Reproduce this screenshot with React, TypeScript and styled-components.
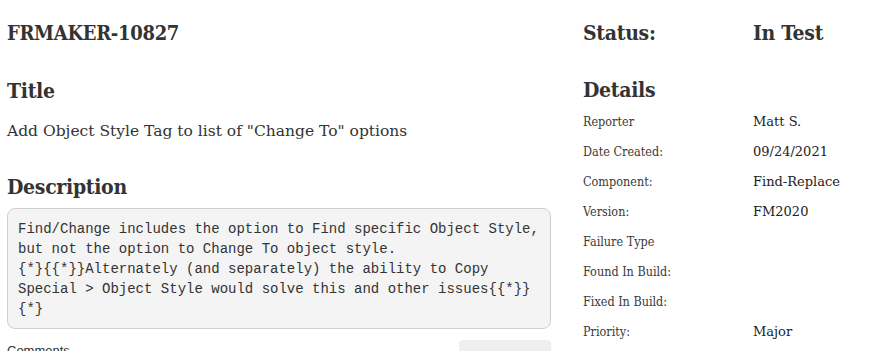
import React from 'react';
import styled, {createGlobalStyle} from 'styled-components';

const GlobalStyle = createGlobalStyle`
  body {
    margin: 0;
    background: #fff;
    color: #333;
    font-family: "DejaVu Serif", "Liberation Serif", serif;
  }
`

const Page = styled.div`
  display: grid;
  grid-template-columns: 544px 1fr;
  column-gap: 32px;
  padding: 18px 7px 0;
  height: 351px;
  box-sizing: border-box;
  overflow: hidden;
`

const Column = styled.div`
  display: flex;
  flex-direction: column;
`

const Heading = styled.h2<{ $top?: number; $size?: number }>`
  margin: ${({$top}) => $top ?? 0}px 0 0;
  font-size: ${({$size}) => $size ?? 21}px;
  font-weight: 700;
  font-stretch: condensed;
  line-height: 30px;
  color: #333;
  letter-spacing: -0.3px;
`

const Summary = styled.div`
  margin-top: 15px;
  font-size: 15.5px;
  line-height: 20px;
  color: #333;
`

const DescriptionBox = styled.pre`
  margin: 6px 0 0;
  padding: 10px 10px 9px;
  background: #f4f4f4;
  border: 1px solid #cfcfcf;
  border-radius: 8px;
  font-family: "Liberation Mono", monospace;
  font-size: 14px;
  line-height: 20px;
  color: #333;
  white-space: pre-wrap;
  word-wrap: break-word;
`

const CommentsBar = styled.div`
  display: flex;
  justify-content: space-between;
  align-items: flex-start;
  margin-top: 11px;
`

const CommentsLabel = styled.div`
  font-family: "Liberation Sans", Arial, sans-serif;
  font-size: 13px;
  line-height: 16px;
  color: #333;
  padding-top: 3px;
`

const SmallButton = styled.button`
  width: 92px;
  height: 30px;
  border: none;
  border-radius: 4px;
  background: #efefef;
  font-family: "Liberation Sans", Arial, sans-serif;
  font-size: 13px;
  color: #333;
`

const StatusRow = styled.div`
  display: grid;
  grid-template-columns: 170px 1fr;
`

const DetailsGrid = styled.div`
  display: grid;
  grid-template-columns: 170px 1fr;
  margin-top: 2px;
`

const Cell = styled.div<{ $value?: boolean }>`
  font-size: ${({$value}) => ($value ? 13 : 12.5)}px;
  line-height: 30px;
  font-stretch: ${({$value}) => ($value ? 'normal' : 'condensed')};
  color: ${({$value}) => ($value ? '#222' : '#3a3a3a')};
`

const details: [string, string][] = [
	['Reporter', 'Matt S.'],
	['Date Created:', '09/24/2021'],
	['Component:', 'Find-Replace'],
	['Version:', 'FM2020'],
	['Failure Type', ''],
	['Found In Build:', ''],
	['Fixed In Build:', ''],
	['Priority:', 'Major'],
]

const description = `Find/Change includes the option to Find specific Object Style, but not the option to Change To object style.
{*}{{*}}Alternately (and separately) the ability to Copy Special > Object Style would solve this and other issues{{*}}{*}`

const App = () => {
	return (
		<>
			<GlobalStyle/>
			<Page>
				<Column>
					<Heading $size={20}>FRMAKER-10827</Heading>
					<Heading $top={28}>Title</Heading>
					<Summary>Add Object Style Tag to list of "Change To" options</Summary>
					<Heading $top={31}>Description</Heading>
					<DescriptionBox>{description}</DescriptionBox>
					<CommentsBar>
						<CommentsLabel>Comments</CommentsLabel>
						<SmallButton>Hide</SmallButton>
					</CommentsBar>
				</Column>
				<Column>
					<StatusRow>
						<Heading>Status:</Heading>
						<Heading>In Test</Heading>
					</StatusRow>
					<Heading $top={27}>Details</Heading>
					<DetailsGrid>
						{details.map(([label, value]) => (
							<React.Fragment key={label}>
								<Cell>{label}</Cell>
								<Cell $value>{value}</Cell>
							</React.Fragment>
						))}
					</DetailsGrid>
				</Column>
			</Page>
		</>
	);
};

export default App;
